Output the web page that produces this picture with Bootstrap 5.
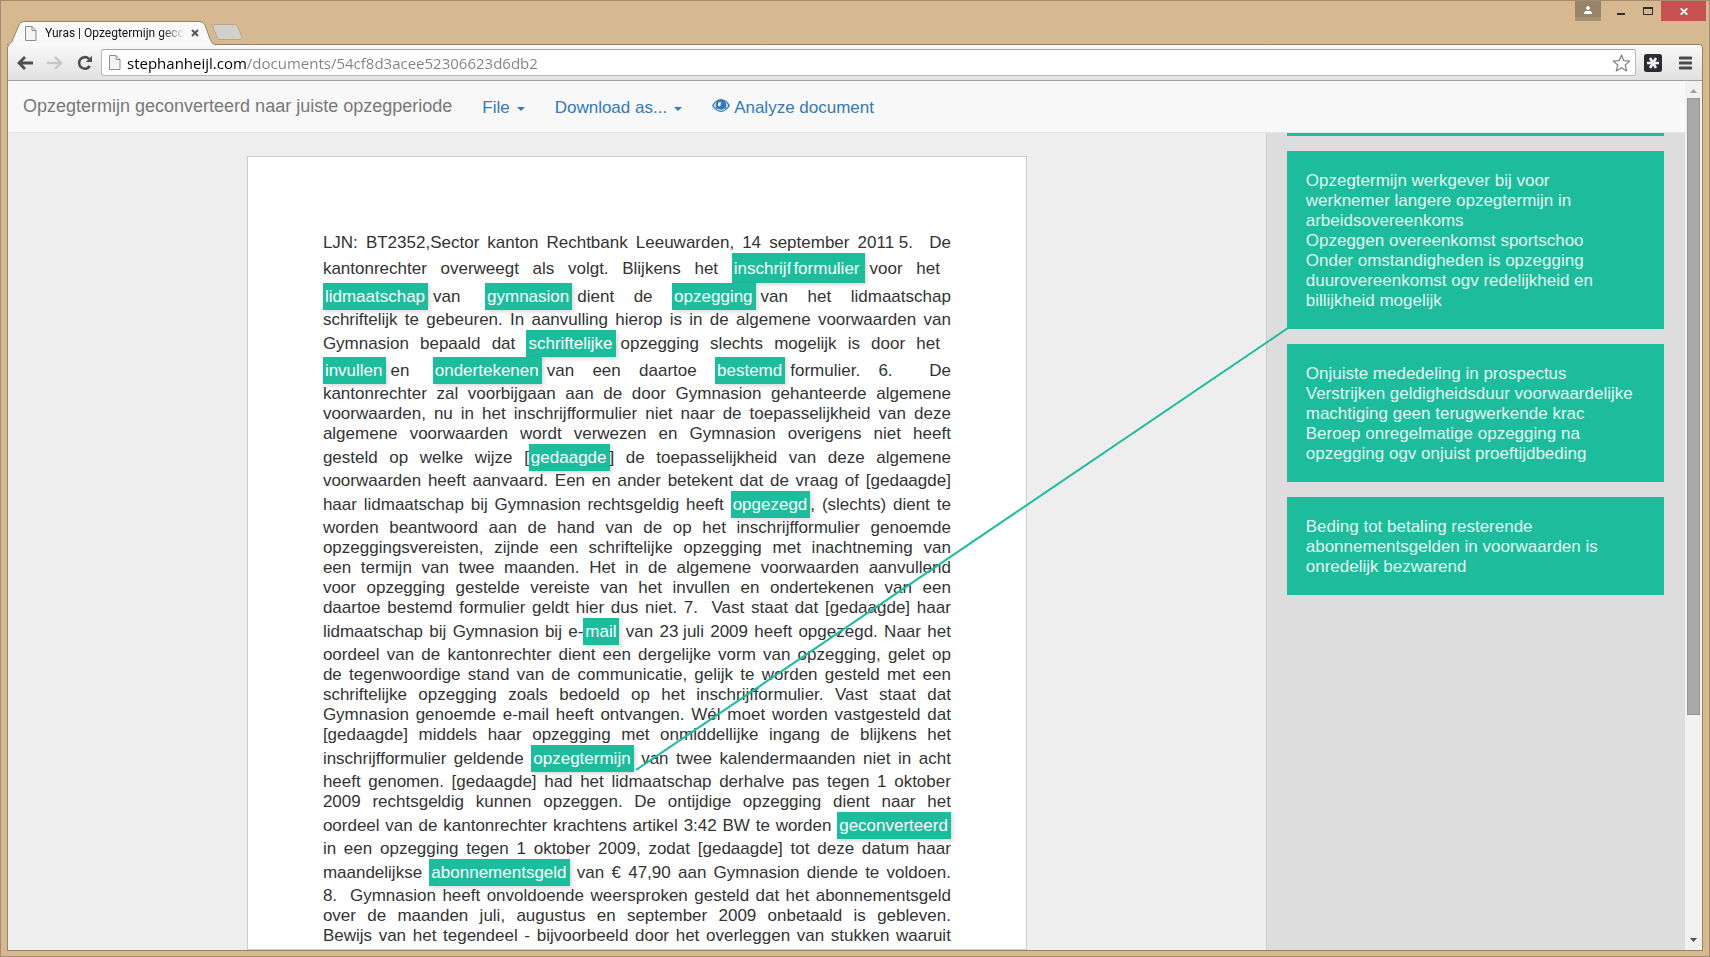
<!DOCTYPE html>
<html lang="nl">
<head>
<meta charset="utf-8">
<meta name="viewport" content="width=device-width, initial-scale=1">
<title>Yuras | Opzegtermijn geconverteerd naar juiste opzegperiode</title>
<link href="https://cdn.jsdelivr.net/npm/bootstrap@5.3.0/dist/css/bootstrap.min.css" rel="stylesheet">
<style>
  :root { --tan: #d6b991; --edge: #96845f; --teal: #1cbc9c; --link: #337ab7; }
  body { font-family: "Liberation Sans", Arial, sans-serif; font-size: 17px; line-height: 20px; color: #333; background: var(--tan); }
  button { background: none; border: 0; padding: 0; color: inherit; }
  svg { display: block; flex: none; }

  /* Window frame */
  .win { border: 1px solid #a48c70; height: 100vh; padding: 0 6px 5px; }
  .strip { height: 43px; }
  .tab-item { width: 205px; height: 24px; font: 12px/24px Roboto, sans-serif; color: #111; z-index: 2; margin-bottom: -1px; padding-left: 18px; }
  .tab-shape { left: 0; top: 0; }
  .tab-text { width: 138px; white-space: nowrap; -webkit-mask: linear-gradient(90deg, #000 116px, transparent 140px); mask: linear-gradient(90deg, #000 116px, transparent 140px); }
  .win-buttons { margin-right: -3px; }
  .win-user { width: 26px; height: 20px; background: linear-gradient(#978367 16px, #a69072 16px); }
  .win-btn { width: 26px; height: 20px; }
  .win-close { width: 45px; height: 20px; background: #c75050; }
  .frame { border: 1px solid var(--edge); border-radius: 4px 4px 0 0; }
  .tools { height: 36px; background: linear-gradient(#f8f8f8, #e1e1e1); border-bottom: 1px solid #a0a0a0; border-radius: 3px 3px 0 0; padding: 0 10px 0 9px; }
  .tool-group { gap: 14px; }
  .omni { height: 27px; gap: 6px; background: #fff; border: 1px solid #b9b9b9; border-top-color: #a3a3a3; border-radius: 3px; padding: 0 4px 0 7px; }
  .omni input { border: 0; outline: 0; padding: 0; font: 15px/22px "Open Sans", sans-serif; color: transparent; background: linear-gradient(90deg, #000 119px, #808080 119px); -webkit-background-clip: text; background-clip: text; min-width: 0; }

  /* Application bar */
  .app-bar { height: 52px; background: #f8f8f8; border-bottom: 1px solid #e7e7e7; padding: 2px 15px 0; }
  .doc-name { font-size: 18px; line-height: 20px; color: #777; }
  .app-link { color: var(--link); font-size: 17px; padding-left: 6px; }
  .app-link.dropdown-toggle::after { border-top-width: 4px; border-left-width: 4px; border-right-width: 4px; margin-left: 7px; vertical-align: 2px; }

  /* Document and matches */
  .desk { background: #eee; }
  .paper { width: 780px; margin-top: 23px; padding: 76px 75px; background: #fff; border: 1px solid #ccc; }
  .ln { display: block; white-space: nowrap; text-align: justify; text-align-last: justify; }
  .ln-short { padding-right: 11px; }
  .hl { display: inline-block; background: var(--teal); color: #fff; padding: 4px 3px 3px 2px; box-shadow: 2px 2px 4px rgba(0,0,0,.15); }
  .hl-join { margin-right: 5px; }
  .hl-apart { margin-left: 5px; }
  .hl-wrap { padding: 2px 3px 1px 2px; }
  .hl-wrap .hl { padding-left: 2px; padding-right: 2px; box-shadow: none; }
  .hits { width: 25%; background: #ddd; border-left: 1px solid #ccc; padding: 0 21px 0 20px; }
  .hit { background: var(--teal); color: rgba(255,255,255,.9); padding: 20px 19px 18px; margin-bottom: 15px; }
  .hit-above { height: 3px; padding: 0; }
  .wire { inset: 0; z-index: 3; pointer-events: none; }
  .bar { width: 17px; background: #f1f1f1; padding: 7px 2px 8px; }
  .thumb { height: 617px; background: #a8a8a8; border: 1px solid #989898; }
</style>
</head>
<body>
<div class="win d-flex flex-column overflow-hidden">

  <header class="strip d-flex flex-shrink-0">
    <div class="tab-item position-relative d-flex align-items-center align-self-end">
      <svg class="tab-shape position-absolute" width="208" height="24" viewBox="0 0 208 24" aria-hidden="true"><path d="M0 24C4 23 5 21 6 18L12 4Q13 .5 17 .5H192Q196 .5 198 4L203 18Q205 23 208 24Z" fill="#f9f9f9"/><path d="M0 23.500C4 23 5 21 6 18L12 4Q13 .5 17 .5H192Q196 .5 198 4L203 18Q205 23 208 23.500" fill="none" stroke="#96845f"/></svg>
      <svg class="position-relative me-2" width="12" height="15" viewBox="0 0 12 15" aria-hidden="true"><path d="M.5.500H7L11 4.500V14.500H.5Z M7 .5V4.500H11" fill="#f4f4f4" stroke="#8d8d8d"/></svg>
      <span class="tab-text position-relative">Yuras | Opzegtermijn gecc</span>
      <button class="position-relative ms-2" aria-label="Tab sluiten"><svg width="8" height="8" viewBox="0 0 8 8"><path d="M1 1L7 7M7 1L1 7" stroke="#555" stroke-width="2"/></svg></button>
    </div>
    <button class="align-self-end mb-1" aria-label="Nieuw tabblad"><svg width="31" height="16" viewBox="0 0 31 16"><path d="M1.500.500H23Q25 .5 26 3L30 13Q30 15.500 28 15.500H8Q6 15.500 5 13L.5 2Q.5.500 1.500.500Z" fill="#d2d0cb" stroke="#b9a586"/></svg></button>
    <div class="win-buttons d-flex ms-auto">
      <button class="win-user d-flex justify-content-center me-2" aria-label="Gebruiker"><svg class="mt-1" width="10" height="10" viewBox="0 0 10 10"><path d="M4 1H6V2H7V4H6V5H4V4H3V2H4ZM2 6H8V7H9V9H1V7H2Z" fill="#fff"/></svg></button>
      <button class="win-btn" aria-label="Minimaliseren"><svg width="26" height="20" viewBox="0 0 26 20"><path d="M8 12H16V14H8Z" fill="#2f2f2f"/></svg></button>
      <button class="win-btn" aria-label="Maximaliseren"><svg width="26" height="20" viewBox="0 0 26 20"><path d="M8 6H18V14H8ZM9 8V13H17V8Z" fill="#2f2f2f" fill-rule="evenodd"/></svg></button>
      <button class="win-close d-flex align-items-center justify-content-center" aria-label="Sluiten"><svg width="8" height="7" viewBox="0 0 8 7"><path d="M.7.300L7.300 6.700M7.300.300L.7 6.700" stroke="#fff" stroke-width="1.800"/></svg></button>
    </div>
  </header>

  <div class="frame flex-grow-1 d-flex flex-column overflow-hidden">
    <div class="tools d-flex align-items-center flex-shrink-0">
      <div class="tool-group d-flex align-items-center me-2">
        <button aria-label="Terug"><svg width="16" height="14" viewBox="0 0 16 14"><path d="M8 1L2 7L8 13M2.500 7H16" fill="none" stroke="#4f4f4f" stroke-width="2.800"/></svg></button>
        <button aria-label="Vooruit"><svg width="16" height="14" viewBox="0 0 16 14"><path d="M8 1L14 7L8 13M13.500 7H0" fill="none" stroke="#c6c6c6" stroke-width="2.400"/></svg></button>
        <button aria-label="Vernieuwen"><svg width="16" height="16" viewBox="0 0 16 16"><path d="M12.800 11A5.800 5.800 0 1 1 12 3.800" fill="none" stroke="#4f4f4f" stroke-width="2.600"/><path d="M15 .8V7H8.800Z" fill="#4f4f4f"/></svg></button>
      </div>
      <div class="omni d-flex align-items-center flex-grow-1">
        <svg width="12" height="15" viewBox="0 0 12 15" aria-hidden="true"><path d="M.5.500H7L11 4.500V14.500H.5Z M7 .5V4.500H11" fill="#f4f4f4" stroke="#8d8d8d"/></svg>
        <input class="flex-grow-1" type="text" aria-label="Adres" value="stephanheijl.com/documents/54cf8d3acee52306623d6db2">
        <button aria-label="Bladwijzer"><svg width="19" height="18" viewBox="0 0 19 18"><path d="M9.500 1L11.800 6.700L17.800 7.100L13.200 11L14.700 16.900L9.500 13.700L4.300 16.900L5.800 11L1.200 7.100L7.200 6.700Z" fill="#fff" stroke="#808080" stroke-width="1.200" stroke-linejoin="round"/></svg></button>
      </div>
      <button class="ms-2 me-3" aria-label="Extensie"><svg width="19" height="18" viewBox="0 0 19 18"><rect width="18" height="18" rx="2.500" fill="#2d2b30"/><path d="M3 9H15M6 4L12 14M12 4L6 14" stroke="#f0f0f4" stroke-width="2.600"/></svg></button>
      <button aria-label="Menu"><svg width="13" height="14" viewBox="0 0 13 14"><path d="M1 2H12M1 7H12M1 12H12" stroke="#4d484d" stroke-width="3" stroke-linecap="round"/></svg></button>
    </div>

    <div class="flex-grow-1 d-flex overflow-hidden">
      <div class="flex-grow-1 d-flex flex-column overflow-hidden">
        <nav class="app-bar d-flex align-items-center flex-shrink-0">
          <span class="doc-name pb-1">Opzegtermijn geconverteerd naar juiste opzegperiode</span>
          <button class="app-link dropdown-toggle ms-4" type="button">File</button>
          <button class="app-link dropdown-toggle ms-4" type="button">Download as...</button>
          <a class="app-link text-decoration-none ms-4 d-flex" href="#analyze"><svg class="me-1" width="18" height="16" viewBox="0 0 18 16" aria-hidden="true"><path d="M0 7.500Q4 1 9 1T18 7.500Q14 14 9 14T0 7.500Z" fill="#337ab7"/><path d="M1.800 7.500Q3 5 5 3.800A5.400 5.400 0 0 0 5 11.200Q3 10 1.800 7.500ZM16.200 7.500Q15 5 13 3.800A5.400 5.400 0 0 1 13 11.200Q15 10 16.200 7.500Z" fill="#f8f8f8"/><path d="M5 11.200Q9 13.600 13 11.200" fill="none" stroke="#f8f8f8"/><path d="M8.800 3.800A3 3 0 0 0 6 6.700Q6 8 7 8.400Q9 8.200 8.800 6Z" fill="#f8f8f8"/></svg>Analyze document</a>
        </nav>

        <div class="flex-grow-1 d-flex position-relative overflow-hidden">
          <main class="desk flex-grow-1 d-flex justify-content-center overflow-hidden">
            <article class="paper flex-shrink-0">
              <span class="ln">LJN: BT2352,Sector kanton Rechtbank Leeuwarden, 14 september <span class="d-inline-block">2011 5.</span> &nbsp;De</span>
              <span class="ln ln-short">kantonrechter overweegt als volgt. Blijkens het <span class="hl hl-wrap hl-join">inschrijf<span class="hl">formulier</span></span>voor het</span>
              <span class="ln"><span class="hl hl-join">lidmaatschap</span>van <span class="hl hl-join hl-apart">gymnasion</span>dient de <span class="hl hl-join">opzegging</span>van het lidmaatschap</span>
              <span class="ln">schriftelijk te gebeuren. In aanvulling hierop is in de algemene voorwaarden van</span>
              <span class="ln ln-short">Gymnasion bepaald dat <span class="hl hl-join">schriftelijke</span>opzegging slechts mogelijk is door het</span>
              <span class="ln"><span class="hl hl-join">invullen</span>en <span class="hl hl-join hl-apart">ondertekenen</span>van een daartoe <span class="hl hl-join">bestemd</span>formulier. 6. &nbsp;De</span>
              <span class="ln">kantonrechter zal voorbijgaan aan de door Gymnasion gehanteerde algemene</span>
              <span class="ln">voorwaarden, nu in het inschrijfformulier niet naar de toepasselijkheid van deze</span>
              <span class="ln">algemene voorwaarden wordt verwezen en Gymnasion overigens niet heeft</span>
              <span class="ln">gesteld op welke wijze [<span class="hl">gedaagde</span>] de toepasselijkheid van deze algemene</span>
              <span class="ln">voorwaarden heeft aanvaard. Een en ander betekent dat de vraag of [gedaagde]</span>
              <span class="ln">haar lidmaatschap bij Gymnasion rechtsgeldig heeft <span class="hl">opgezegd</span>, (slechts) dient te</span>
              <span class="ln">worden beantwoord aan de hand van de op het inschrijfformulier genoemde</span>
              <span class="ln">opzeggingsvereisten, zijnde een schriftelijke opzegging met inachtneming van</span>
              <span class="ln">een termijn van twee maanden. Het in de algemene voorwaarden aanvullend</span>
              <span class="ln">voor opzegging gestelde vereiste van het invullen en ondertekenen van een</span>
              <span class="ln">daartoe bestemd formulier geldt hier dus niet. 7. &nbsp;Vast staat dat [gedaagde] haar</span>
              <span class="ln">lidmaatschap bij Gymnasion bij e-<span class="hl">mail</span> van <span class="d-inline-block">23 juli</span> 2009 heeft opgezegd. Naar het</span>
              <span class="ln">oordeel van de kantonrechter dient een dergelijke vorm van opzegging, gelet op</span>
              <span class="ln">de tegenwoordige stand van de communicatie, gelijk te worden gesteld met een</span>
              <span class="ln">schriftelijke opzegging zoals bedoeld op het inschrijfformulier. Vast staat dat</span>
              <span class="ln">Gymnasion genoemde e-mail heeft ontvangen. Wél moet worden vastgesteld dat</span>
              <span class="ln">[gedaagde] middels haar opzegging met onmiddellijke ingang de blijkens het</span>
              <span class="ln">inschrijfformulier geldende <span class="hl">opzegtermijn</span> van twee kalendermaanden niet in acht</span>
              <span class="ln">heeft genomen. [gedaagde] had het lidmaatschap derhalve pas tegen 1 oktober</span>
              <span class="ln">2009 rechtsgeldig kunnen opzeggen. De ontijdige opzegging dient naar het</span>
              <span class="ln">oordeel van de kantonrechter krachtens artikel 3:42 BW te worden <span class="hl">geconverteerd</span></span>
              <span class="ln">in een opzegging tegen 1 oktober 2009, zodat [gedaagde] tot deze datum haar</span>
              <span class="ln">maandelijkse <span class="hl">abonnementsgeld</span> van € 47,90 aan Gymnasion diende te voldoen.</span>
              <span class="ln">8. &nbsp;Gymnasion heeft onvoldoende weersproken gesteld dat het abonnementsgeld</span>
              <span class="ln">over de maanden juli, augustus en september 2009 onbetaald is gebleven.</span>
              <span class="ln">Bewijs van het tegendeel - bijvoorbeeld door het overleggen van stukken waaruit</span>
            </article>
          </main>
          <aside class="hits flex-shrink-0">
            <div class="hit hit-above"></div>
            <div class="hit">Opzegtermijn werkgever bij voor<br>werknemer langere opzegtermijn in<br>arbeidsovereenkoms<br>Opzeggen overeenkomst sportschoo<br>Onder omstandigheden is opzegging<br>duurovereenkomst ogv redelijkheid en<br>billijkheid mogelijk</div>
            <div class="hit">Onjuiste mededeling in prospectus<br>Verstrijken geldigheidsduur voorwaardelijke<br>machtiging geen terugwerkende krac<br>Beroep onregelmatige opzegging na<br>opzegging ogv onjuist proeftijdbeding</div>
            <div class="hit">Beding tot betaling resterende<br>abonnementsgelden in voorwaarden is<br>onredelijk bezwarend</div>
          </aside>
          <svg class="wire position-absolute w-100 h-100" aria-hidden="true"><path d="M628 637L1280 195" stroke="#1cbc9c" stroke-width="2"/></svg>
        </div>
      </div>

      <div class="bar d-flex flex-column flex-shrink-0" aria-hidden="true">
        <svg class="mx-auto mb-1" width="7" height="6" viewBox="0 0 7 6"><path d="M0 5L3.500 1L7 5Z" fill="#a0a0a0"/></svg>
        <div class="thumb"></div>
        <svg class="mx-auto mt-auto" width="7" height="4" viewBox="0 0 7 4"><path d="M0 0H7L3.500 4Z" fill="#505050"/></svg>
      </div>
    </div>
  </div>
</div>
<script src="https://cdn.jsdelivr.net/npm/bootstrap@5.3.0/dist/js/bootstrap.bundle.min.js"></script>
</body>
</html>
